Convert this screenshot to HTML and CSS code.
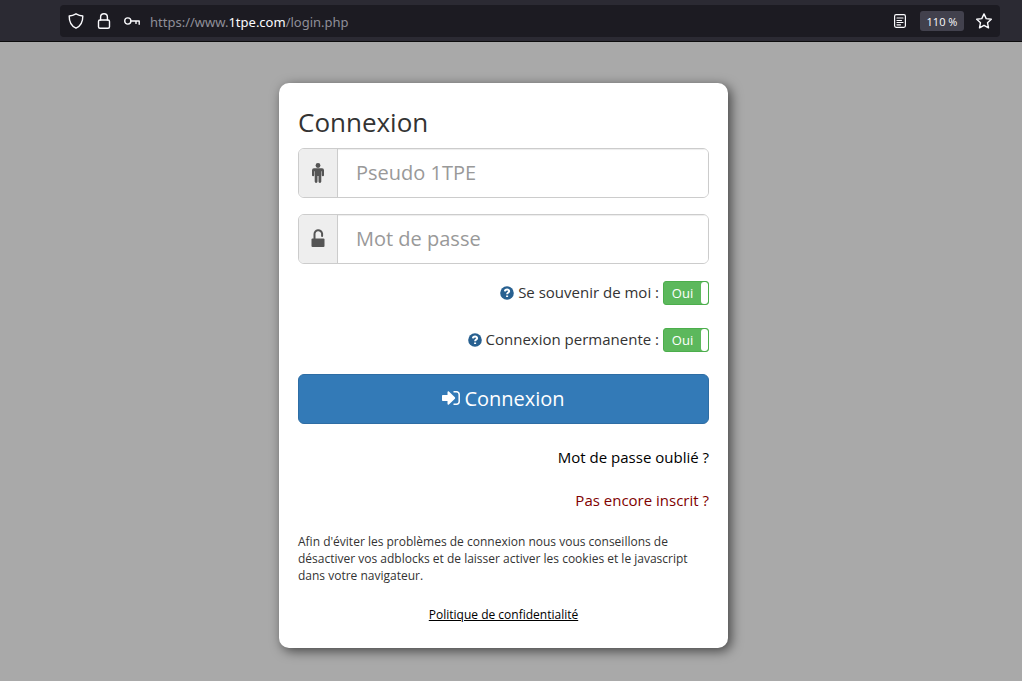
FILE: index.html
```html
<!DOCTYPE html>
<html lang="fr">
<head>
<meta charset="utf-8">
<title>Connexion</title>
<link rel="stylesheet" href="styles.css">
</head>
<body>
<header class="browser-bar">
  <div class="address-bar">
    <svg class="bar-icon" viewBox="0 0 16 16" aria-hidden="true"><path d="M8 .8C10.2 2 12.200 2.700 14.800 3c.1 5.500-1.600 9.800-6.800 12.200C2.800 12.800 1.100 8.500 1.200 3 3.800 2.700 5.800 2 8 .8z"/></svg>
    <svg class="bar-icon" viewBox="0 0 16 16" aria-hidden="true"><rect x="2.500" y="7" width="11" height="8.200" rx="1.500"/><path d="M4.600 7V4.100a3.400 3.400 0 0 1 6.800 0V7"/></svg>
    <svg class="bar-icon" viewBox="0 0 16 16" aria-hidden="true"><circle cx="3.800" cy="8" r="3.100"/><path d="M7 8h8.200v3.200M12 8v2.400"/></svg>
    <span class="url">https://www.<span class="url-host">1tpe.com</span>/login.php</span>
    <svg class="bar-icon reader" viewBox="0 0 16 16" aria-hidden="true"><rect x="2.600" y="1.700" width="10.800" height="12.600" rx="1.500"/><path d="M5 5h6M5 7.500h4.500M5 9.500h6M5 11.800h3.500"/></svg>
    <button class="zoom-level" type="button">110 %</button>
    <svg class="bar-icon" viewBox="0 0 16 16" aria-hidden="true"><path d="M8 .9l2.200 4.700 5.100.6-3.800 3.500 1 5.100L8 12.300l-4.500 2.500 1-5.100L.7 6.200l5.100-.6z"/></svg>
  </div>
</header>
<main class="page">
  <form class="card">
    <h1 class="title">Connexion</h1>
    <div class="field">
      <label class="addon" for="user" aria-label="Pseudo 1TPE"><svg class="glyph" viewBox="0 0 14 20" aria-hidden="true"><circle cx="7" cy="2.500" r="2.400"/><path d="M3 5.300h8a2 2 0 0 1 2 2v4.900a1.100 1.100 0 0 1-2.200 0V8.200h-.5v10.300a1.400 1.400 0 0 1-2.800 0V13h-1v5.500a1.400 1.400 0 0 1-2.800 0V8.200h-.5v4a1.100 1.100 0 0 1-2.200 0V7.300a2 2 0 0 1 2-2z"/></svg></label>
      <input class="input" id="user" type="text" placeholder="Pseudo 1TPE">
    </div>
    <div class="field">
      <label class="addon" for="pass" aria-label="Mot de passe"><svg class="glyph" viewBox="0 0 14 20" aria-hidden="true"><rect x="0.500" y="9.500" width="13" height="8.500" rx="1"/><path class="shackle" d="M3.500 10V5.500a3.400 3.400 0 0 1 7.600-.8v2.300"/></svg></label>
      <input class="input" id="pass" type="password" placeholder="Mot de passe">
    </div>
    <div class="options">
      <label class="option">
        <svg class="help" viewBox="0 0 14 14" aria-hidden="true"><circle cx="7" cy="7" r="6.800"/><path d="M4.900 5.300c.2-2.400 4.400-2.300 4.200 0C9 6.600 7.100 6.600 7.100 8.300M7.100 9.400v1.700"/></svg>
        <span class="option-text">Se souvenir de moi :</span>
        <input class="toggle-input" type="checkbox" checked>
        <span class="toggle"><span class="toggle-text">Oui</span></span>
      </label>
      <label class="option">
        <svg class="help" viewBox="0 0 14 14" aria-hidden="true"><circle cx="7" cy="7" r="6.800"/><path d="M4.900 5.300c.2-2.400 4.400-2.300 4.200 0C9 6.600 7.100 6.600 7.100 8.300M7.100 9.400v1.700"/></svg>
        <span class="option-text">Connexion permanente :</span>
        <input class="toggle-input" type="checkbox" checked>
        <span class="toggle"><span class="toggle-text">Oui</span></span>
      </label>
    </div>
    <button class="submit" type="submit">
      <svg class="login-icon" viewBox="0 0 18 16" aria-hidden="true"><path class="arrow" d="M.8 5h4.700V2.200c0-.8.8-1.200 1.400-.6l6 5.700c.4.400.4 1 0 1.400l-6 5.700c-.6.600-1.400.2-1.400-.6V11H.8c-.5 0-.8-.3-.8-.8V5.800C0 5.300.3 5 .8 5z"/><path class="door" d="M11.500 1.700h3a2.700 2.700 0 0 1 2.700 2.700v7.200a2.700 2.700 0 0 1-2.700 2.700h-3"/></svg>
      <span>Connexion</span>
    </button>
    <nav class="links">
      <a class="link" href="#">Mot de passe oublié ?</a>
      <a class="link link-signup" href="#">Pas encore inscrit ?</a>
    </nav>
    <p class="notice">Afin d'éviter les problèmes de connexion nous vous conseillons de désactiver vos adblocks et de laisser activer les cookies et le javascript dans votre navigateur.</p>
    <a class="privacy" href="#">Politique de confidentialité</a>
  </form>
</main>
</body>
</html>
```

FILE: styles.css
```css
* { box-sizing: border-box; }
body {
  margin: 0;
  min-height: 100vh;
  background: #a9a9a9;
  color: #333;
  font-family: "Open Sans", "Noto Sans", sans-serif;
  font-size: 15px;
  line-height: 20px;
}
.browser-bar {
  padding: 5px 22px 4px 60px;
  background: #2b2a33;
  border-bottom: 1px solid #0c0c0d;
}
.address-bar {
  display: flex;
  align-items: center;
  gap: 12px;
  height: 32px;
  padding: 0 8px;
  border-radius: 4px;
  background: #1c1b22;
}
.bar-icon {
  flex: none;
  width: 16px;
  height: 16px;
  fill: none;
  stroke: #fbfbfe;
  stroke-width: 1.4;
  stroke-linecap: round;
  stroke-linejoin: round;
}
.reader { stroke-width: 1.2; }
.url {
  flex: 1;
  padding-top: 2px;
  margin-left: -2px;
  color: #8f8f99;
  font-family: "Noto Sans", "Open Sans", sans-serif;
  font-size: 13px;
}
.url-host { color: #fbfbfe; }
.zoom-level {
  width: 44px;
  height: 20px;
  padding: 0;
  border: 0;
  border-radius: 3px;
  background: #42414d;
  color: #fbfbfe;
  font: 11px "Open Sans", sans-serif;
}
.page {
  display: flex;
  justify-content: center;
  padding: 41px 15px 33px 0;
}
.card {
  display: flex;
  flex-direction: column;
  width: 100%;
  max-width: 449px;
  padding: 24px 19px;
  border-radius: 10px;
  background: #fff;
  box-shadow: 3px 3px 12px rgba(0, 0, 0, .6);
}
.title {
  margin: 0 0 11px;
  font-size: 26px;
  font-weight: 400;
  line-height: 30px;
}
.field {
  display: flex;
  height: 50px;
  margin-bottom: 16px;
  border: 1px solid #ccc;
  border-radius: 6px;
  overflow: hidden;
}
.addon {
  display: flex;
  align-items: center;
  justify-content: center;
  width: 39px;
  border-right: 1px solid #ccc;
  background: #eee;
}
.glyph {
  width: 14px;
  height: 20px;
  fill: #555;
}
.shackle {
  fill: none;
  stroke: #555;
  stroke-width: 2;
  stroke-linecap: round;
}
.input {
  flex: 1;
  min-width: 0;
  padding: 0 18px 1px;
  border: 0;
  background: #fff;
  box-shadow: inset 0 1px 1px rgba(0, 0, 0, .075);
  color: #555;
  font: 20px "Open Sans", sans-serif;
}
.input::placeholder { color: #999; opacity: 1; }
.options {
  display: flex;
  flex-direction: column;
  align-items: flex-end;
  gap: 23px;
  margin: 1px 0 22px;
}
.option {
  display: flex;
  align-items: center;
  gap: 4px;
}
.option-text { padding-bottom: 2px; }
.help {
  width: 14px;
  height: 14px;
  fill: #286090;
}
.help path {
  fill: none;
  stroke: #fff;
  stroke-width: 2;
}
.toggle-input {
  position: absolute;
  opacity: 0;
}
.toggle {
  display: flex;
  width: 46px;
  height: 24px;
  border: 1px solid #4cae4c;
  border-radius: 3px;
  background: #5cb85c;
  color: #fff;
  font-size: 13px;
  line-height: 23px;
  overflow: hidden;
}
.toggle-text { flex: 1; text-align: center; }
.toggle::after {
  content: "";
  width: 7px;
  border-radius: 3px;
  background: #fff;
}
.submit {
  display: flex;
  align-items: center;
  justify-content: center;
  gap: 4px;
  height: 50px;
  padding: 0 16px 2px;
  border: 1px solid #2e6da4;
  border-radius: 6px;
  background: #337ab7;
  color: #fff;
  font: 20px "Open Sans", sans-serif;
}
.login-icon {
  width: 18px;
  height: 16px;
}
.arrow { fill: #fff; }
.door {
  fill: none;
  stroke: #fff;
  stroke-width: 1.5;
}
.links {
  display: flex;
  flex-direction: column;
  align-items: flex-end;
  gap: 23px;
  margin: 23px 0;
}
.link {
  color: #000;
  text-decoration: none;
}
.link-signup { color: #800000; }
.notice {
  margin: 0 0 22px;
  font-size: 12px;
  line-height: 17px;
}
.privacy {
  align-self: center;
  color: #000;
  font-size: 12px;
  line-height: 18px;
}
```
